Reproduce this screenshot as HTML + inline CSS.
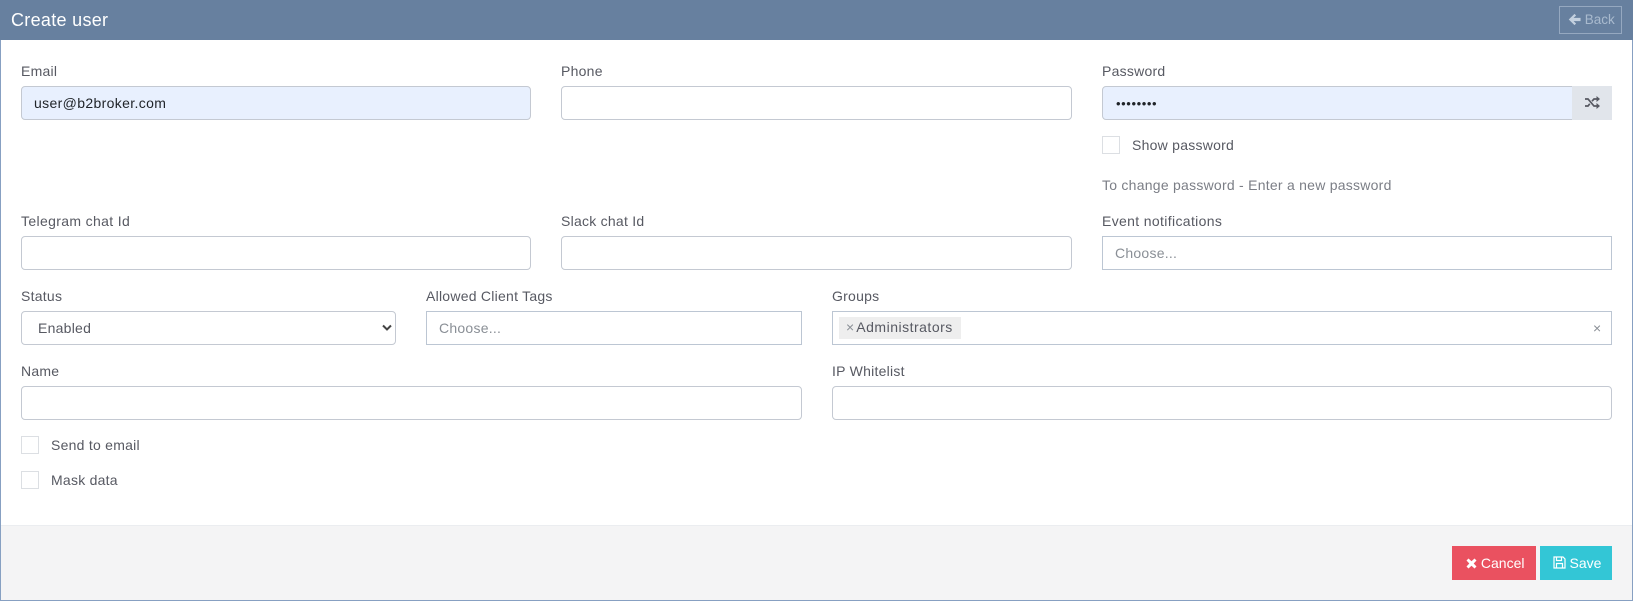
<!DOCTYPE html>
<html lang="en">
<head>
<meta charset="utf-8">
<title>Create user</title>
<style>
*{box-sizing:border-box}
html,body{margin:0;padding:0;width:1633px;height:601px;overflow:hidden;background:#fff}
body{font-family:"Liberation Sans",Arial,sans-serif;font-size:14px;color:#575962;position:relative;letter-spacing:.25px}
.abs,.l,.i,.c,.t{position:absolute}
.frame{left:0;top:0;width:1633px;height:601px;border:1px solid #87a0c2;border-top:0}
.head{left:0;top:0;width:1633px;height:40px;background:#67809f}
.title{left:11px;top:8px;font-size:18px;line-height:24px;color:#fff;letter-spacing:.3px}
.back{left:1559px;top:6px;width:63px;height:28px;border:1px solid #95a8c0;color:#a9bace;font-size:13.500px;line-height:26px;padding-left:8px;white-space:nowrap;letter-spacing:0}
.l{line-height:20px;white-space:nowrap;font-size:14px;color:#575962}
.i{height:34px;border:1px solid #c4c9d2;border-radius:4px;background:#fff;line-height:33px;padding-left:12px;font-size:14px;color:#495057;white-space:nowrap}
.s{border-radius:0;border-color:#bcc6d3;color:#8a8f96}
.af{background:#e8f0fe}
.c{width:18px;height:18px;border:1px solid #dcdfe3;background:#fff}
.foot{left:1px;top:525px;width:1631px;height:75px;background:#f4f4f5;border-top:1px solid #ebedf0}
.btn{top:546px;height:34px;color:#fff;font-size:14px;line-height:34px;white-space:nowrap;letter-spacing:0}
svg{display:inline-block;vertical-align:-1px}
</style>
</head>
<body>
<div class="abs frame"></div>
<div class="abs head"></div>
<div class="abs title">Create user</div>
<div class="abs back"><svg style="vertical-align:-2px" width="13" height="13" viewBox="0 0 14 13"><path d="M7 .5 .8 6.500 7 12.500l1.700-1.700L6 8.200h7.500V4.800H6l2.700-2.600z" fill="#c3d0df"/></svg> Back</div>

<div class="l" style="left:21px;top:61px">Email</div>
<div class="i af" style="left:21px;top:86px;width:510px;color:#1f2328;letter-spacing:.35px">user@b2broker.com</div>
<div class="l" style="left:561px;top:61px">Phone</div>
<div class="i" style="left:561px;top:86px;width:511px"></div>
<div class="l" style="left:1102px;top:61px">Password</div>
<div class="i af" style="left:1102px;top:86px;width:471px;border-radius:4px 0 0 4px;color:#1f2328;padding-left:13px;font-size:13px;letter-spacing:.6px">••••••••</div>
<div class="abs" style="left:1572px;top:86px;width:40px;height:34px;background:#e1e5eb"></div>
<svg class="abs" style="left:1585px;top:96px" width="15" height="13" viewBox="0 0 15 13"><path d="M0 3h3l6 7h3M0 10h3l1.800-2.200M7 5.200 9 3h3" fill="none" stroke="#575962" stroke-width="1.700"/><path d="M11.500 0 15 3l-3.500 3zM11.500 7l3.500 3-3.500 3z" fill="#575962"/></svg>
<div class="c" style="left:1102px;top:136px"></div>
<div class="l" style="left:1132px;top:135px">Show password</div>
<div class="l" style="left:1102px;top:175px;color:#7b7e86">To change password - Enter a new password</div>

<div class="l" style="left:21px;top:211px;letter-spacing:.35px">Telegram chat Id</div>
<div class="i" style="left:21px;top:236px;width:510px"></div>
<div class="l" style="left:561px;top:211px">Slack chat Id</div>
<div class="i" style="left:561px;top:236px;width:511px"></div>
<div class="l" style="left:1102px;top:211px;letter-spacing:.35px">Event notifications</div>
<div class="i s" style="left:1102px;top:236px;width:510px">Choose...</div>

<div class="l" style="left:21px;top:286px">Status</div>
<div class="i" style="left:21px;top:311px;width:375px;padding-left:16px;color:#575962">Enabled
<svg class="abs" style="left:360px;top:12px" width="10" height="8" viewBox="0 0 10 8"><path d="M1 1.500 5 5.500l4-4" fill="none" stroke="#444" stroke-width="2"/></svg></div>
<div class="l" style="left:426px;top:286px">Allowed Client Tags</div>
<div class="i s" style="left:426px;top:311px;width:376px">Choose...</div>
<div class="l" style="left:832px;top:286px">Groups</div>
<div class="i s" style="left:832px;top:311px;width:780px"></div>
<div class="abs" style="left:839px;top:317px;width:122px;height:22px;background:#eeeeee;color:#575962;line-height:21px;padding-left:7px;white-space:nowrap;letter-spacing:.5px"><span style="color:#8a8f96;margin-right:-2px">×</span> Administrators</div>
<div class="abs" style="left:1593px;top:317px;line-height:22px;color:#8a8f96">×</div>

<div class="l" style="left:21px;top:361px">Name</div>
<div class="i" style="left:21px;top:386px;width:781px"></div>
<div class="l" style="left:832px;top:361px">IP Whitelist</div>
<div class="i" style="left:832px;top:386px;width:780px"></div>

<div class="c" style="left:21px;top:436px"></div>
<div class="l" style="left:51px;top:435px">Send to email</div>
<div class="c" style="left:21px;top:471px"></div>
<div class="l" style="left:51px;top:470px">Mask data</div>

<div class="abs foot"></div>
<div class="abs btn" style="left:1452px;width:84px;background:#ea5160;padding-left:14px"><svg width="11" height="11" viewBox="0 0 11 11"><path d="M2.500 .5 5.500 3.300 8.500 .5 10.500 2.500 7.700 5.500 10.500 8.500 8.500 10.500 5.500 7.700 2.500 10.500 .5 8.500 3.300 5.500 .5 2.500z" fill="#fff"/></svg> Cancel</div>
<div class="abs btn" style="left:1540px;width:72px;background:#33c6d6;padding-left:13px"><svg width="13" height="13" viewBox="0 0 13 13"><path d="M1 1h9l2 2v9H1zM3.500 1v3.500h5V1M3.500 12V7.500h6V12" fill="none" stroke="#fff" stroke-width="1.200"/></svg><span style="margin-left:3.500px">Save</span></div>
</body>
</html>
